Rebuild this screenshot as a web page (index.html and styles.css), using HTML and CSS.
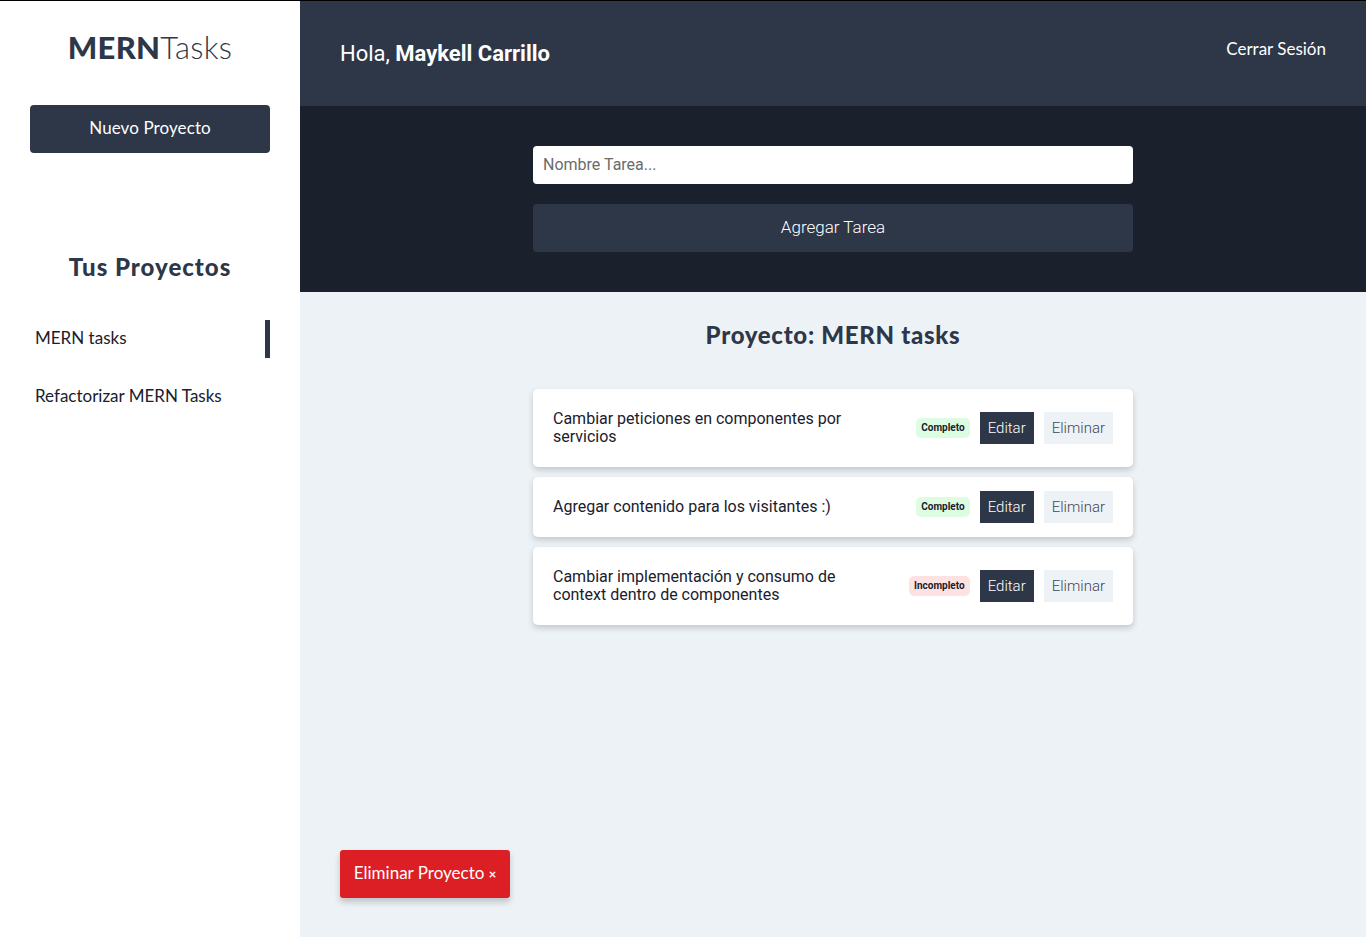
FILE: index.html
```html
<!DOCTYPE html>
<html lang="es">
<head>
<meta charset="utf-8">
<title>MERN Tasks</title>
<link rel="stylesheet" href="styles.css">
</head>
<body>
<div class="app">
  <aside class="sidebar">
    <h1 class="logo"><span class="logo-bold">MERN</span><span class="logo-light">Tasks</span></h1>
    <button class="btn-new">Nuevo Proyecto</button>
    <h2 class="projects-title">Tus Proyectos</h2>
    <ul class="project-list">
      <li class="project-item active">MERN tasks</li>
      <li class="project-item">Refactorizar MERN Tasks</li>
    </ul>
  </aside>
  <main class="main">
    <header class="topbar">
      <p class="greeting">Hola, <strong>Maykell Carrillo</strong></p>
      <a class="logout">Cerrar Sesión</a>
    </header>
    <section class="form-area">
      <form class="task-form">
        <input class="task-input" type="text" placeholder="Nombre Tarea...">
        <button type="button" class="btn-add">Agregar Tarea</button>
      </form>
    </section>
    <section class="content">
      <h2 class="project-name">Proyecto: MERN tasks</h2>
      <ul class="task-list">
        <li class="task">
          <p class="task-text">Cambiar peticiones en componentes por servicios</p>
          <div class="task-actions">
            <span class="badge badge-ok">Completo</span>
            <button class="btn-edit">Editar</button>
            <button class="btn-del">Eliminar</button>
          </div>
        </li>
        <li class="task">
          <p class="task-text">Agregar contenido para los visitantes :)</p>
          <div class="task-actions">
            <span class="badge badge-ok">Completo</span>
            <button class="btn-edit">Editar</button>
            <button class="btn-del">Eliminar</button>
          </div>
        </li>
        <li class="task">
          <p class="task-text">Cambiar implementación y consumo de context dentro de componentes</p>
          <div class="task-actions">
            <span class="badge badge-no">Incompleto</span>
            <button class="btn-edit">Editar</button>
            <button class="btn-del">Eliminar</button>
          </div>
        </li>
      </ul>
      <button class="btn-delete-project">Eliminar Proyecto <span class="x">×</span></button>
    </section>
  </main>
</div>
</body>
</html>
```

FILE: styles.css
```css
* { box-sizing: border-box; }
html, body { margin: 0; padding: 0; }
body {
  border-top: 1px solid #000;
  font-family: "Lato", "Open Sans", sans-serif;
  color: #2d3748;
  background: #edf2f7;
}
.app {
  display: flex;
  height: 936px;
}
.sidebar {
  width: 300px;
  flex: 0 0 300px;
  background: #fff;
  padding: 0 30px;
  display: flex;
  flex-direction: column;
}
.logo {
  margin: 26px 0 0;
  text-align: center;
  font-size: 31px;
  line-height: 40px;
  color: #2d3748;
  letter-spacing: 0.3px;
}
.logo-bold { font-weight: 900; }
.logo-light { font-weight: 300; }
.btn-new {
  margin-top: 38px;
  height: 48px;
  width: 240px;
  border: 0;
  border-radius: 4px;
  background: #2d3748;
  color: #fff;
  font-family: "Lato", sans-serif;
  font-size: 17px;
  letter-spacing: 0.1px;
  padding: 0 0 3px;
}
.projects-title {
  margin: 99px 0 0;
  text-align: center;
  font-size: 24px;
  line-height: 30px;
  font-weight: 900;
  letter-spacing: 1px;
  color: #2d3748;
}
.project-list {
  list-style: none;
  margin: 38px 0 0;
  padding: 0;
}
.project-item {
  height: 38px;
  display: flex;
  align-items: center;
  padding-left: 5px;
  padding-bottom: 3px;
  font-size: 17px;
  color: #1a202c;
  margin-bottom: 20px;
  border-right: 5px solid transparent;
}
.project-item.active { border-right-color: #2d3748; }

.main {
  flex: 1;
  display: flex;
  flex-direction: column;
  min-width: 0;
}
.topbar {
  height: 105px;
  background: #2d3748;
  display: flex;
  justify-content: space-between;
  align-items: center;
  padding: 0 40px;
  color: #fff;
}
.greeting {
  margin: 0;
  font-family: "Roboto", sans-serif;
  font-size: 22px;
  font-weight: 400;
}
.greeting strong { font-weight: 700; }
.logout {
  font-size: 17px;
  margin-top: -10px;
  color: #fff;
}
.form-area {
  background: #1a202c;
  padding: 40px 0;
  display: flex;
  justify-content: center;
}
.task-form {
  width: 600px;
  display: flex;
  flex-direction: column;
  gap: 20px;
}
.task-input {
  height: 38px;
  border: 0;
  border-radius: 4px;
  padding: 0 10px 2px;
  font-family: "Roboto", sans-serif;
  font-size: 16px;
  background: #fff;
}
.task-input::placeholder { color: #6b6b6b; }
.btn-add {
  height: 48px;
  border: 0;
  border-radius: 4px;
  background: #2d3748;
  color: #fff;
  font-family: "Roboto", sans-serif;
  font-size: 17px;
  font-weight: 300;
  padding: 0 0 2px;
}
.content {
  flex: 1;
  display: flex;
  flex-direction: column;
  align-items: center;
  padding: 29px 40px 39px;
}
.project-name {
  margin: 0;
  font-size: 24px;
  line-height: 28px;
  font-weight: 900;
  letter-spacing: 0.7px;
  color: #2d3748;
}
.task-list {
  list-style: none;
  margin: 40px 0 0;
  padding: 0;
  width: 600px;
  display: flex;
  flex-direction: column;
  gap: 10px;
}
.task {
  background: #fff;
  border-radius: 5px;
  box-shadow: 0 3px 6px rgba(0,0,0,0.18);
  padding: 14px 20px;
  display: flex;
  align-items: center;
  justify-content: space-between;
}
.task-text {
  margin: 0;
  padding: 7px 0;
  max-width: 310px;
  font-family: "Roboto", sans-serif;
  font-size: 16px;
  line-height: 18px;
  color: #1a202c;
}
.task-actions {
  display: flex;
  align-items: center;
  gap: 10px;
}
.badge {
  font-family: "Roboto", sans-serif;
  font-size: 10px;
  font-weight: 700;
  padding: 0 5px;
  height: 20px;
  line-height: 20px;
  border-radius: 5px;
  color: #1a202c;
}
.badge-ok { background: #ddfde3; }
.badge-no { background: #fee2e2; }
.btn-edit, .btn-del {
  height: 32px;
  border: 0;
  padding: 0 8px;
  font-family: "Roboto", sans-serif;
  font-size: 15px;
  font-weight: 300;
}
.btn-edit { background: #2d3748; color: #fff; }
.btn-del { background: #edf2f7; color: #3f4654; }
.btn-delete-project {
  margin-top: auto;
  align-self: flex-start;
  height: 48px;
  width: 170px;
  border: 0;
  border-radius: 3px;
  background: #dc1f24;
  color: #fff;
  font-family: "Lato", sans-serif;
  font-size: 17px;
  padding: 0 0 3px;
  box-shadow: 0 4px 6px rgba(0,0,0,0.2);
}
.btn-delete-project .x { font-size: 13px; font-weight: 700; }
```
